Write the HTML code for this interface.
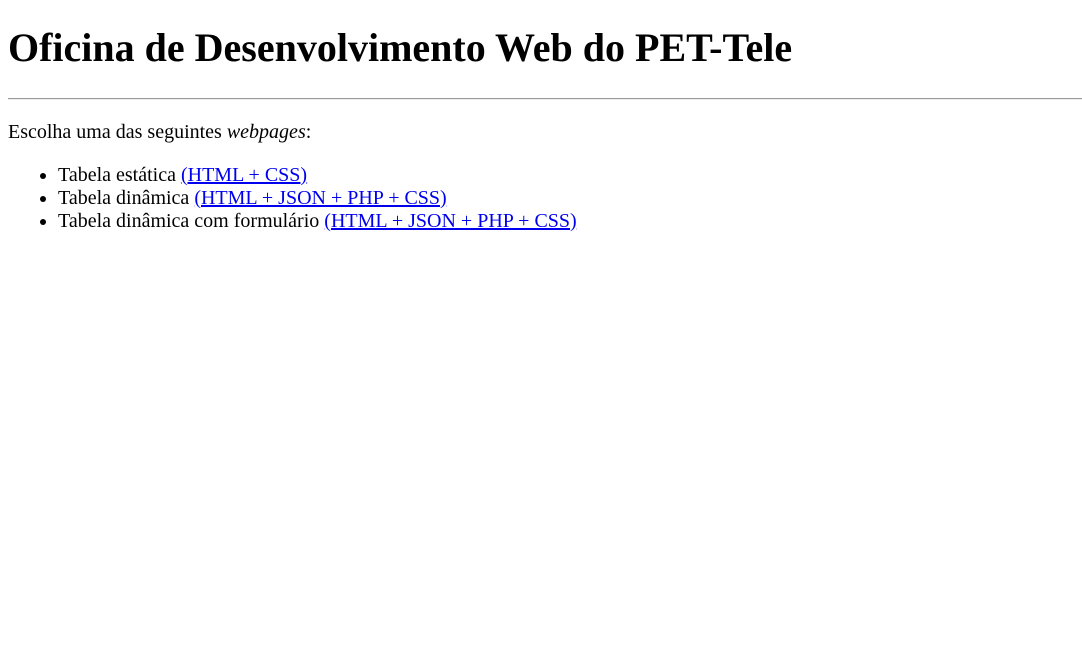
<!DOCTYPE html>
<html><head><meta charset="utf-8"><style>
body{margin:8px;font-family:"Liberation Serif",serif;font-size:20px;color:#000;background:#fff}
h1{font-size:40px;margin:24px 0 26.8px}
hr{margin:10px -8px 10px 0;border:0;border-top:1px solid #999;border-bottom:1px solid #eee}
p{margin:21px 0 20px}
ul{padding-left:50px;margin:20px 0}
a{color:#00e}
</style></head><body>
<h1>Oficina de Desenvolvimento Web do PET-Tele</h1>
<hr>
<p>Escolha uma das seguintes <i>webpages</i>:</p>
<ul>
<li>Tabela estática <a href="#">(HTML + CSS)</a></li>
<li>Tabela dinâmica <a href="#">(HTML + JSON + PHP + CSS)</a></li>
<li>Tabela dinâmica com formulário <a href="#">(HTML + JSON + PHP + CSS)</a></li>
</ul>
</body></html>
